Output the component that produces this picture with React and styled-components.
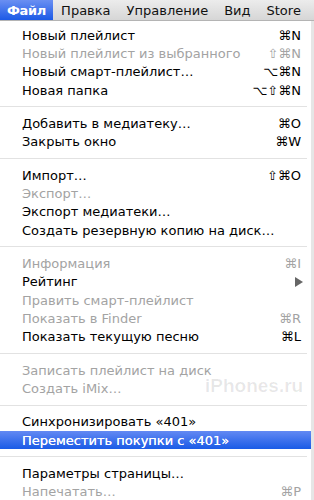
import React from "react";
import styled, { createGlobalStyle } from "styled-components";

const GlobalStyle = createGlobalStyle`
  html, body {
    margin: 0;
    padding: 0;
    background: #e6e6e6;
  }
`;

const menuTitles = ["Файл", "Правка", "Управление", "Вид", "Store"];

const groups = [
  [
    { label: "Новый плейлист", keys: "⌘N" },
    { label: "Новый плейлист из выбранного", keys: "⇧⌘N", disabled: true },
    { label: "Новый смарт-плейлист…", keys: "⌥⌘N" },
    { label: "Новая папка", keys: "⌥⇧⌘N" },
  ],
  [
    { label: "Добавить в медиатеку…", keys: "⌘O" },
    { label: "Закрыть окно", keys: "⌘W" },
  ],
  [
    { label: "Импорт…", keys: "⇧⌘O" },
    { label: "Экспорт…", disabled: true },
    { label: "Экспорт медиатеки…" },
    { label: "Создать резервную копию на диск…" },
  ],
  [
    { label: "Информация", keys: "⌘I", disabled: true },
    { label: "Рейтинг", submenu: true },
    { label: "Править смарт-плейлист", disabled: true },
    { label: "Показать в Finder", keys: "⌘R", disabled: true },
    { label: "Показать текущую песню", keys: "⌘L" },
  ],
  [
    { label: "Записать плейлист на диск", disabled: true },
    { label: "Создать iMix…", disabled: true },
  ],
  [
    { label: "Синхронизировать «401»" },
    { label: "Переместить покупки с «401»", selected: true },
  ],
  [
    { label: "Параметры страницы…" },
    { label: "Напечатать…", keys: "⌘P", disabled: true },
  ],
];

const App = () => {
  return (
    <>
      <GlobalStyle />
      <Screen>
        <MenuBar>
          {menuTitles.map((title, i) => (
            <MenuTitle key={title} active={i === 0}>
              {title}
            </MenuTitle>
          ))}
        </MenuBar>
        <Dropdown>
          {groups.map((group, gi) => (
            <React.Fragment key={gi}>
              {gi > 0 && <Separator />}
              {group.map((item) => (
                <Item
                  key={item.label}
                  disabled={item.disabled}
                  selected={item.selected}
                >
                  <Label>{item.label}</Label>
                  {item.keys && <Keys>{item.keys}</Keys>}
                  {item.submenu && <Arrow />}
                </Item>
              ))}
            </React.Fragment>
          ))}
          <Watermark>iPhones.ru</Watermark>
        </Dropdown>
      </Screen>
    </>
  );
};

const Screen = styled.div`
  width: 314px;
  height: 500px;
  overflow: hidden;
  font-family: "DejaVu Sans", "Liberation Sans", sans-serif;
`;

const MenuBar = styled.div`
  display: flex;
  align-items: stretch;
  height: 21px;
  background: linear-gradient(#ececec, #d6d6d6);
  border-bottom: 1px solid #b4b4b4;
  box-sizing: border-box;
`;

const MenuTitle = styled.div`
  display: flex;
  align-items: center;
  padding: ${(p) => (p.active ? "0 7px 0 7px" : "0 8px")};
  font-size: 13px;
  letter-spacing: ${(p) => (p.active ? "-0.3px" : "0")};
  font-weight: ${(p) => (p.active ? "bold" : "normal")};
  color: ${(p) => (p.active ? "#fff" : "#111")};
  background: ${(p) =>
    p.active ? "linear-gradient(#6a8ff2, #1c5ae6)" : "transparent"};
  white-space: nowrap;
`;

const Dropdown = styled.div`
  position: relative;
  width: 311px;
  height: 479px;
  padding-top: 5px;
  box-sizing: border-box;
  background: rgba(255, 255, 255, 0.97);
`;

const Item = styled.div`
  display: flex;
  align-items: center;
  height: 18.33px;
  padding: 0 10px 0 22px;
  font-size: 13px;
  color: ${(p) => (p.selected ? "#fff" : p.disabled ? "#a3a3a3" : "#000")};
  background: ${(p) =>
    p.selected ? "linear-gradient(#6389f3, #1a5be6)" : "transparent"};
  text-shadow: ${(p) => (p.selected ? "0 0 0.4px #fff" : "none")};
`;

const Label = styled.span`
  flex: 1;
  white-space: nowrap;
`;

const Keys = styled.span`
  white-space: nowrap;
`;

const Arrow = styled.span`
  width: 0;
  height: 0;
  margin-right: -2px;
  border-top: 5px solid transparent;
  border-bottom: 5px solid transparent;
  border-left: 8px solid #666;
`;

const Separator = styled.div`
  height: 1px;
  margin: 7px 4px 7px 0;
  background: #e2e2e2;
`;

const Watermark = styled.div`
  position: absolute;
  left: 205px;
  top: 354px;
  font-family: "Liberation Sans", sans-serif;
  font-size: 19px;
  font-weight: bold;
  color: rgba(0, 0, 0, 0.09);
  pointer-events: none;
`;

export default App;
